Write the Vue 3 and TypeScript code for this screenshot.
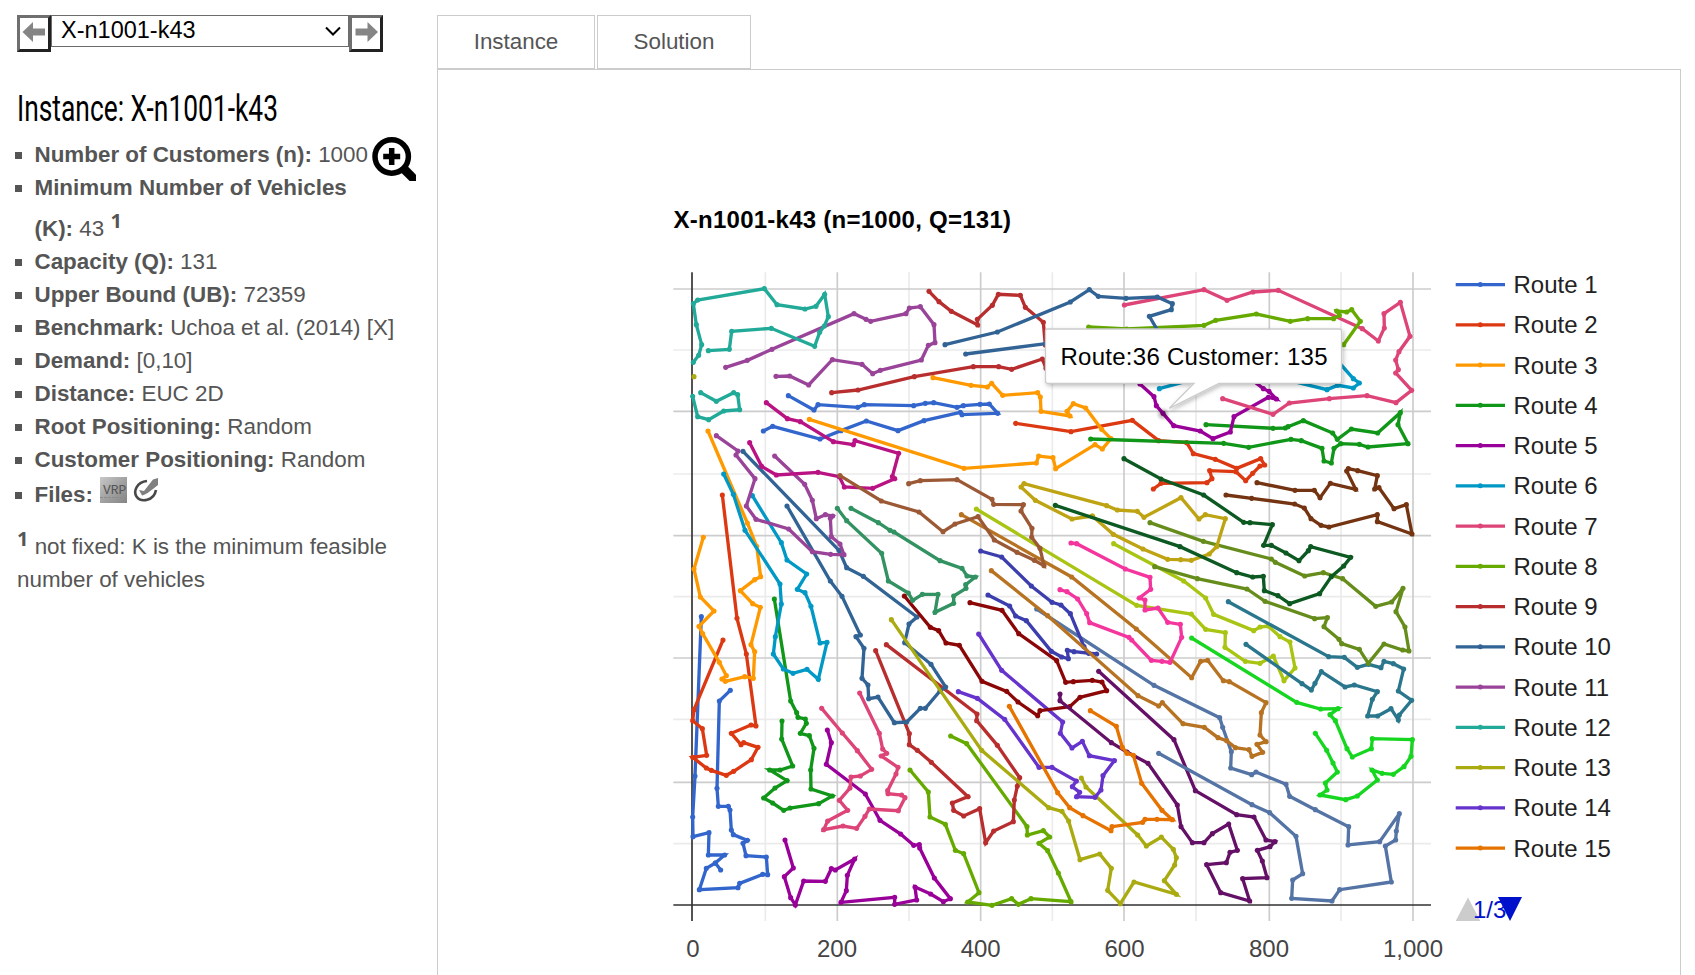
<script setup lang="ts">
interface Route {
  color: string
  paths: string[]
}

interface Fact {
  label: string
  value: string
}

const facts: Fact[] = [
  { label: 'Capacity (Q):', value: '131' },
  { label: 'Upper Bound (UB):', value: '72359' },
  { label: 'Benchmark:', value: 'Uchoa et al. (2014) [X]' },
  { label: 'Demand:', value: '[0,10]' },
  { label: 'Distance:', value: 'EUC 2D' },
  { label: 'Root Positioning:', value: 'Random' },
  { label: 'Customer Positioning:', value: 'Random' },
]

// Route coordinates in plot units (three units per pixel).
const routes: Route[] = [
  { color: '#3366cc', paths: [
    '355,407 432,450 444,434 563,442 583,434 731,437 766,430 791,428 861,442 880,437 930,433 958,432 983,460 876,464 871,457 762,482 684,512 589,483 513,512 450,537 308,499 280,513',
    '94,1070 75,1548 68,1671 69,1730 117,1718 115,1785 164,1785 136,1809 152,1830 136,1809 109,1825 88,1889 204,1883 209,1870 278,1843 293,1844 289,1791 228,1787 219,1750 232,1741 190,1724 184,1710 180,1650 175,1639 145,1639 141,1585 148,1323 181,1291' ] },
  { color: '#dc3912', paths: [
    '157,705 201,1075 229,1182 258,1398 243,1395 184,1420 213,1454 221,1448 264,1462 244,1499 191,1534 169,1546 124,1531 109,1524 68,1492 110,1486 97,1406 68,1382 72,1349 159,1140',
    '1037,490 1203,515 1387,481 1466,542 1550,548 1570,581 1636,598 1700,625 1772,596 1784,615 1770,618 1748,640 1727,662 1698,635 1619,632 1626,656 1611,668 1473,670 1450,687' ] },
  { color: '#ff9900', paths: [
    '789,353 903,376 952,381 965,370 998,406 1103,398 1111,411 1113,454 1200,468 1191,454 1210,431 1247,444 1295,508 1323,536 1297,567 1275,554 1157,626 1149,593 1106,588 1099,609 882,625 418,478',
    '114,513 232,789 260,859 272,950 254,959 211,992 248,1031 271,1042 243,1154 254,1175 250,1255 224,1250 166,1264 156,1257 169,1247 148,1207 98,1121 87,1099 132,1053 91,1011 72,927 100,832' ] },
  { color: '#109618', paths: [
    '1262,537 1661,550 1736,562 1863,538 1894,542 1956,565 1962,603 1984,609 1992,565 2012,551 2068,553 2094,561 2214,551 2184,494 2191,458 2123,519 2044,507 2002,538 1988,519 1900,482 1854,500 1846,504 1809,505 1608,494',
    '313,1017 362,1323 380,1358 384,1372 406,1377 409,1390 391,1420 418,1427 432,1465 422,1530 423,1587 487,1608 446,1631 360,1644 341,1651 308,1629 281,1614 315,1584 351,1562 299,1530 330,1530 368,1518 335,1437 336,1383' ] },
  { color: '#990099', paths: [
    '472,1410 484,1448 469,1513 586,1602 630,1681 692,1722 731,1756 748,1754 749,1764 793,1854 841,1916 820,1925 782,1902 735,1881 740,1920 674,1933 674,1912 513,1927 529,1892 532,1846 554,1797 496,1830 484,1826 466,1864 401,1863 376,1935 362,1913 343,1850 370,1824 345,1740',
    '1375,345 1410,372 1452,410 1459,437 1479,460 1511,497 1591,513 1629,536 1681,516 1692,470 1795,412 1819,417 1797,394 1780,386 1740,355' ] },
  { color: '#0099c6', paths: [
    '161,642 190,703 225,811 330,972 334,1032 316,1130 310,1182 340,1227 369,1240 411,1228 445,1258 471,1147 450,1149 423,1039 405,998 382,988 410,942 351,900 334,848 247,707',
    '1468,386 1570,358',
    '1860,362 1971,389 2003,376 2050,384 2068,369 2050,356 2005,305' ] },
  { color: '#dd4477', paths: [
    '1363,135 1602,89 1671,121 1749,96 1825,91 2077,206 2125,243 2143,204 2142,161 2191,127 2220,229 2187,275 2177,300 2185,329 2177,339 2225,391 2178,428 2091,407 1978,416 1858,429 1809,463 1658,416',
    '455,1345 517,1419 562,1472 605,1528 571,1548 543,1551 540,1584 508,1621 533,1651 473,1683 461,1709 519,1698 560,1705 585,1669 598,1647 685,1652 705,1613 695,1605 654,1601 653,1592 678,1542 684,1522 634,1488 650,1480 638,1467 628,1420 569,1299' ] },
  { color: '#66aa00', paths: [
    '1256,201 1370,207 1602,196 1637,181 1759,162 1861,184 1913,176 1991,176 2008,166 2000,153 2030,156 2045,149 2071,184 2021,254',
    '720,1530 775,1596 780,1671 826,1693 856,1771 881,1781 927,1898 893,1926 966,1936 1025,1916 1045,1933 1083,1916 1203,1925 1165,1839 1133,1772 1107,1750 1139,1731 1120,1712 1072,1725 1071,1700 890,1451 842,1428' ] },
  { color: '#b82e2e', paths: [
    '485,398 564,390 733,350 910,320 986,320 1025,328 1117,297 1128,325',
    '1126,255 1120,187 1066,142 1051,106 985,103 967,136 922,178 923,195 844,154 807,125 777,94',
    '649,1154 921,1362 920,1382 982,1456 1049,1553 1042,1578 1033,1620 1030,1685 971,1713 947,1748 929,1646 881,1668 851,1651 847,1629 894,1610 784,1507 742,1471 718,1454 718,1421 617,1172' ] },
  { color: '#316395', paths: [
    '825,254 982,216 1201,126 1258,89 1285,109 1368,115 1462,111 1507,131 1504,149 1438,169 1465,215',
    '887,282 1128,251',
    '219,574 507,871 530,923 580,949 741,1071 717,1092 704,1148 783,1213 827,1281 810,1293 766,1345 751,1345 710,1386 673,1388 624,1311 596,1316 594,1275 576,1255 582,1165 558,1130 571,1125 516,1009 481,963 351,738' ] },
  { color: '#994499', paths: [
    '167,322 232,301 306,268 552,161 588,178 602,184 708,161 718,144 751,140 792,194 795,248 775,256 754,300 631,331 608,341 576,313 487,299 416,375 359,348 318,349',
    '139,527 204,573 198,585 255,656 229,738 258,778 356,807 427,875 482,883 522,884 510,852 484,830 481,775 488,768 466,764 439,776 427,721 404,673 314,588' ] },
  { color: '#22aa99', paths: [
    '70,307 86,286 95,254 79,194 70,131 83,120 283,86 321,134 405,147 438,139 464,103 475,170 463,198 449,217 434,259 304,205 185,214 178,268 115,272',
    '92,398 139,424 191,398 203,404 209,449 161,453 116,479 83,470 68,409' ] },
  { color: '#aaaa11', paths: [
    '72,350',
    '664,1079 935,1471 1136,1643 1176,1654 1196,1683 1230,1799 1289,1782 1324,1825 1313,1891 1351,1931 1392,1866 1519,1903 1483,1862 1514,1815 1519,1793 1510,1768 1474,1731 1429,1758 1403,1725 1248,1581 1234,1554' ] },
  { color: '#6633cc', paths: [
    '926,1122 995,1231 1178,1386 1171,1420 1206,1464 1237,1444 1258,1487 1333,1502 1299,1547 1293,1590 1275,1612 1220,1610 1229,1597 1207,1580 1219,1563 1146,1522 1107,1522 1004,1378 922,1315 865,1295' ] },
  { color: '#8b0707', paths: [
    '703,1008 781,1102 806,1112 828,1149 868,1156 936,1264 1010,1294 1044,1326 1103,1367 1110,1352 1199,1340 1230,1312 1310,1292 1296,1266 1267,1261 1210,1265 1187,1267 1160,1202 1046,1121 996,1051 900,1028' ] },
  { color: '#651067', paths: [
    '1170,1302 1170,1322 1324,1448 1371,1476 1434,1510 1522,1635 1533,1700 1567,1748 1602,1748 1627,1721 1676,1692 1702,1771 1680,1777 1669,1808 1610,1814 1652,1898 1739,1923 1718,1856 1791,1853 1777,1803 1762,1771 1800,1760 1815,1745 1788,1740 1752,1671 1700,1664 1576,1592 1512,1439 1286,1234' ] },
  { color: '#e67300', paths: [
    '1018,1339 1163,1598 1199,1643 1239,1667 1323,1712 1326,1700 1418,1687 1425,1678 1461,1678 1507,1679 1476,1651 1415,1570 1390,1486 1371,1480 1357,1462 1339,1399 1261,1352' ] },
  { color: '#329262', paths: [
    '502,745 530,782 635,880 655,963 715,999 728,1021 757,1003 804,1003 795,1057 851,1030 851,1008 888,985 887,974 916,951 891,948 876,925 810,902 672,816 660,811 625,788 543,745' ] },
  { color: '#5574a6', paths: [
    '1100,1047 1452,1276 1649,1373 1658,1402 1684,1475 1682,1524 1745,1544 1758,1536 1848,1573 1859,1609 1936,1649 2036,1700 2034,1755 2129,1745 2188,1661 2179,1713 2177,1740 2146,1758 2164,1866 2009,1889 1986,1923 1865,1915 1868,1860 1898,1841 1878,1729 1799,1658 1746,1634 1466,1480' ] },
  { color: '#3b3eac', paths: [
    '932,873 995,891 1084,978 1146,1027 1173,1035 1201,1061 1242,1160 1256,1180 1280,1182 1212,1175 1192,1171 1195,1196 1175,1191 1144,1174 1069,1082 1037,1068 1019,1038 954,1005' ] },
  { color: '#b77322', paths: [
    '874,764 1205,951 1399,1107 1565,1253 1592,1204 1613,1201 1660,1262 1678,1265 1788,1328 1774,1358 1770,1425 1788,1445 1761,1453 1778,1477 1746,1489 1737,1469 1696,1463 1670,1442 1644,1433 1603,1402 1539,1391 1477,1328 1466,1338 1404,1307 1133,1067 964,932' ] },
  { color: '#16d620', paths: [
    '1565,1134 1880,1327 1952,1347 2004,1346 1980,1364 1996,1382 2031,1466 2047,1491 2104,1466 2107,1436 2227,1439 2223,1489 2202,1520 2170,1543 2136,1540 2106,1530 2122,1560 2062,1608 2027,1619 1950,1605 1971,1590 1966,1569 2002,1536 1989,1509 1970,1471 1936,1420' ] },
  { color: '#b91383', paths: [
    '239,548 275,619 319,645 444,637 508,650 523,681 608,685 674,656 667,650 686,580 555,542 550,554 490,545 391,485 352,476 289,428' ] },
  { color: '#a9c413', paths: [
    '919,747 1400,1036 1564,1062 1607,1108 1666,1118 1665,1162 1726,1204 1770,1210 1810,1188 1842,1262 1875,1224 1860,1146 1830,1130 1794,1098 1770,1101 1751,1112 1631,1063 1607,1014 1541,963 1331,851' ] },
  { color: '#f4359e', paths: [
    '1203,849 1220,851 1366,927 1440,952 1442,988 1408,1014 1425,1020 1425,1050 1464,1044 1493,1087 1531,1093 1535,1132 1500,1207 1476,1204 1444,1201 1385,1140 1377,1132 1259,1088 1250,1061 1223,1017 1191,995 1170,989' ] },
  { color: '#9c5935', paths: [
    '510,647 634,723 747,756 819,815 855,792 924,770 973,840 1041,877 1093,901 1122,917 1110,865 1085,832 1086,805 1053,753 1060,734 971,733 966,718 861,659 751,662 716,671' ] },
  { color: '#2a778d', paths: [
    '1675,1025 1976,1190 2023,1192 2062,1222 2095,1213 2133,1223 2142,1204 2170,1211 2201,1227 2185,1293 2225,1321 2188,1365 2185,1380 2163,1346 2123,1368 2093,1368 2107,1318 2122,1295 2053,1275 2025,1281 1954,1235 1935,1270 1924,1290 1896,1271 1728,1153' ] },
  { color: '#668d1c', paths: [
    '1440,788 1600,844 1804,897 1816,907 1904,948 1960,938 2018,956 2117,1039 2165,1026 2199,985 2178,1055 2205,1101 2217,1173 2198,1170 2142,1152 2095,1210 2068,1168 2015,1151 2007,1138 1962,1100 1972,1073 1934,1076 1785,1024 1731,987 1582,956 1454,920' ] },
  { color: '#bea413', paths: [
    '1267,768 1206,777 1096,721 1053,681 1062,671 1310,737 1342,750 1402,754 1422,772 1533,713 1587,777 1606,764 1666,776 1640,860 1618,882 1564,901 1532,899 1493,898 1419,867 1330,823 1267,768' ] },
  { color: '#0c5922', paths: [
    '1362,596 1473,657 1601,705 1721,787 1740,788 1807,794 1781,856 1804,856 1848,879 1887,902 1915,872 1922,860 2042,892 2021,918 1984,950 1949,1001 1859,1031 1824,1007 1783,992 1780,949 1748,951 1700,938 1530,860 1156,736' ] },
  { color: '#743411', paths: [
    '1668,705 1745,715 1874,732 1903,744 1923,776 1953,796 1977,801 2122,764 2122,785 2226,822 2209,734 2172,746 2127,683 2114,687 2122,647 2063,632 2035,626 2030,633 2057,688 1981,670 1950,713 1933,691 1875,691 1761,668' ] },
]

const lines = routes.flatMap((r) =>
  r.paths.map((p) => ({
    color: r.color,
    points: p,
    stops: p.split(' ').map((s) => s.split(',').map(Number)),
  })),
)

const majorX = [502, 932, 1362, 1798, 2229]
const minorX = [286, 717, 1147, 1578, 2013]
const majorY = [87, 454, 827, 1194, 1567]
const minorY = [270, 642, 1010, 1378, 1751]

const ticks = [
  { x: 693, label: '0' },
  { x: 837, label: '200' },
  { x: 980.7, label: '400' },
  { x: 1124.5, label: '600' },
  { x: 1269, label: '800' },
  { x: 1413, label: '1,000' },
]

const legendColors = [
  '#3366cc', '#dc3912', '#ff9900', '#109618', '#990099',
  '#0099c6', '#dd4477', '#66aa00', '#b82e2e', '#316395',
  '#994499', '#22aa99', '#aaaa11', '#6633cc', '#e67300',
]
const legend = legendColors.map((color, i) => ({
  color,
  label: `Route ${i + 1}`,
  y: 284.6 + i * 40.25,
}))
</script>

<template>
  <div class="page">
    <aside class="sidebar">
      <div class="picker">
        <button class="step" aria-label="Previous">
          <svg width="26" height="26" viewBox="0 0 26 26">
            <path d="M1.500 13 12 3V9.500h12v7H12v6.500Z" fill="#858585" />
          </svg>
        </button>
        <div class="select">
          <span>X-n1001-k43</span>
          <svg width="16" height="10" viewBox="0 0 16 10">
            <path d="M1 1.500 8 8.500 15 1.500" fill="none" stroke="#000" stroke-width="2" />
          </svg>
        </div>
        <button class="step" aria-label="Next">
          <svg width="26" height="26" viewBox="0 0 26 26">
            <path d="M25 13 14.500 3V9.500H2.500v7h12v6.500Z" fill="#858585" />
          </svg>
        </button>
      </div>

      <svg class="heading" width="300" height="56" viewBox="0 0 300 56">
        <text x="0" y="40" textLength="261" lengthAdjust="spacingAndGlyphs">Instance: X-n1001-k43</text>
      </svg>

      <ul class="facts">
        <li>
          <b>Number of Customers (n):</b>&nbsp;1000
          <svg class="magnifier" width="44" height="44" viewBox="0 0 44 44">
            <circle cx="19.700" cy="19.500" r="16.700" fill="none" stroke="#000" stroke-width="5.500" />
            <path d="M32 32 46 46" stroke="#000" stroke-width="9" />
            <path d="M19.700 11v17M11.200 19.500h17" stroke="#000" stroke-width="5.500" />
          </svg>
        </li>
        <li class="two"><b>Minimum Number of Vehicles</b><span class="second"><b>(K):</b> 43 <sup>1</sup></span></li>
        <li v-for="f in facts" :key="f.label"><b>{{ f.label }}</b> {{ f.value }}</li>
        <li class="files">
          <b>Files:</b>
          <svg class="file" width="27" height="26" viewBox="0 0 27 26">
            <defs>
              <linearGradient id="vrp" x1="0" y1="0" x2="1" y2="1">
                <stop offset="0" stop-color="#c8c8c8" />
                <stop offset="0.500" stop-color="#a2a2a2" />
                <stop offset="1" stop-color="#858585" />
              </linearGradient>
            </defs>
            <rect width="27" height="26" fill="url(#vrp)" />
            <path d="M0 20.500h27" stroke="#8c8c8c" stroke-width="1" stroke-dasharray="3 1" />
            <text class="vrp" x="3" y="17">VRP</text>
          </svg>
          <svg class="file check" width="26" height="26" viewBox="0 0 26 26">
            <path d="M14 4C4 5 0 14 3.500 19.500 8 26 21 24 23 13" fill="none" stroke="#484848" stroke-width="2.600" />
            <path d="M6 13 9 18.500C14 17.500 19 12.500 25 8V1L20 2.500 11 14Z" fill="#808080" />
          </svg>
        </li>
      </ul>

      <p class="note"><sup>1</sup> not fixed: K is the minimum feasible<br />number of vehicles</p>
    </aside>

    <main class="content">
      <nav class="tabs">
        <div class="tab">Instance</div>
        <div class="tab second-tab">Solution</div>
      </nav>
      <section class="panel">
        <svg class="chart" width="1020" height="780" viewBox="660 195 1020 780">
          <defs>
            <filter id="shade" x="-10%" y="-20%" width="120%" height="160%">
              <feDropShadow dx="1.500" dy="2" stdDeviation="2" flood-color="#000" flood-opacity="0.25" />
            </filter>
            <filter id="halo" x="-50%" y="-50%" width="200%" height="200%">
              <feGaussianBlur stdDeviation="5" />
            </filter>
          </defs>

          <text class="title" x="673.500" y="227.500" textLength="337.500">X-n1001-k43 (n=1000, Q=131)</text>

          <g transform="translate(670 260) scale(0.333333)">
            <g stroke="#ebebeb" stroke-width="5">
              <path v-for="x in minorX" :key="x" :d="`M${x} 37V1983`" />
              <path v-for="y in minorY" :key="y" :d="`M10 ${y}H2283`" />
            </g>
            <g stroke="#cccccc" stroke-width="5">
              <path v-for="x in majorX" :key="x" :d="`M${x} 37V1983`" />
              <path v-for="y in majorY" :key="y" :d="`M10 ${y}H2283`" />
            </g>
            <path d="M66 37V1983M10 1935H2283" stroke="#333333" stroke-width="5" />

            <g v-for="(l, i) in lines" :key="i" :stroke="l.color" :fill="l.color">
              <polyline :points="l.points" fill="none" stroke-width="10" />
              <circle v-for="(s, j) in l.stops" :key="j" :cx="s[0]" :cy="s[1]" r="7.700" stroke="none" />
            </g>
            <circle cx="1479" cy="462" r="15" fill="#000" opacity="0.250" filter="url(#halo)" />
          </g>

          <path
            class="bubble"
            filter="url(#shade)"
            d="M1047.500 329H1339.500A2 2 0 0 1 1341.500 331V381.300A2 2 0 0 1 1339.500 383.300H1219L1169.300 408.300 1194 383.300H1047.500A2 2 0 0 1 1045.500 381.300V331A2 2 0 0 1 1047.500 329Z"
          />
          <text class="tip" x="1060.500" y="364.500" textLength="267">Route:36 Customer: 135</text>

          <text v-for="t in ticks" :key="t.label" class="tick" :x="t.x" y="957.300" text-anchor="middle">{{ t.label }}</text>

          <g v-for="item in legend" :key="item.label">
            <path :d="`M1455.700 ${item.y}H1505`" :stroke="item.color" stroke-width="3.200" />
            <circle cx="1480.300" :cy="item.y" r="2.500" :fill="item.color" />
            <text class="label" x="1513.500" :y="item.y + 8.400">{{ item.label }}</text>
          </g>

          <path d="M1455.700 921H1480.300L1468 897.500Z" fill="#cccccc" />
          <text class="pager" x="1473" y="918">1/3</text>
          <path d="M1498 897H1522L1510 921Z" fill="#0011cc" />
        </svg>
      </section>
    </main>
  </div>
</template>

<style>
body {
  margin: 0;
  background: #fff;
}
</style>

<style scoped>
.page {
  display: flex;
  width: 1695px;
  height: 975px;
  overflow: hidden;
  background: #fff;
  color: #555;
  font-family: "Liberation Sans", Arial, sans-serif;
  font-size: 22.4px;
}

.sidebar {
  flex: none;
  width: 420px;
  padding: 15px 0 0 17px;
  box-sizing: border-box;
}

.picker {
  display: flex;
  align-items: flex-start;
}

.step {
  display: flex;
  align-items: center;
  justify-content: center;
  width: 34px;
  height: 37px;
  padding: 0 0 3px;
  box-sizing: border-box;
  border: 3px solid;
  border-color: #6f6f6f #222 #222 #6f6f6f;
  background: #fff;
}

.select {
  display: flex;
  align-items: center;
  justify-content: space-between;
  width: 298px;
  height: 32px;
  padding: 0 7px 1px 9px;
  box-sizing: border-box;
  border: 1px solid #6b6b6b;
  color: #000;
  font-size: 23.5px;
}

.heading {
  display: block;
  margin-top: 29px;
  font-family: Roboto, sans-serif;
  font-size: 36px;
  fill: #000;
}

.facts {
  margin: 1px 0 0;
  padding: 0 0 0 17.500px;
  list-style: none;
}

.facts li {
  position: relative;
  height: 33px;
  line-height: 33px;
  white-space: nowrap;
}

.facts li::before {
  content: "";
  position: absolute;
  left: -19.500px;
  top: 14px;
  width: 7px;
  height: 7px;
  background: #555;
}

.facts .two {
  height: 74px;
}

.second {
  display: block;
  height: 41px;
  line-height: 49px;
}

.facts .files {
  display: flex;
  align-items: flex-start;
  height: 35px;
  line-height: 37px;
}

.facts .files::before {
  top: 16px;
}

.file {
  margin: 1px 0 0 7px;
}

.check {
  margin-left: 6px;
}

.magnifier {
  position: absolute;
  left: 337.500px;
  top: -1.500px;
}

.vrp {
  fill: #555;
  font-family: "Liberation Mono", monospace;
  font-size: 13px;
}

sup {
  position: relative;
  top: -8px;
  line-height: 0;
  vertical-align: baseline;
  font-family: "Open Sans", sans-serif;
  font-weight: 700;
  font-size: 20px;
}

.note {
  margin: 19px 0 0;
  line-height: 33px;
}

.content {
  flex: none;
  width: 1244px;
  margin-left: 17px;
  padding-top: 15px;
}

.tabs {
  display: flex;
  gap: 2px;
}

.tab {
  width: 158px;
  height: 54px;
  box-sizing: border-box;
  border: 1px solid #ccc;
  line-height: 51px;
  text-align: center;
}

.second-tab {
  width: 154px;
}

.panel {
  display: flex;
  justify-content: flex-end;
  height: 1000px;
  box-sizing: border-box;
  border: 1px solid #ccc;
}

.chart {
  flex: none;
  margin: 125px 0 0;
}

.title {
  fill: #000;
  font-size: 24px;
  font-weight: 700;
}

.bubble {
  fill: #fff;
  stroke: #ccc;
  stroke-width: 1.300;
}

.tip {
  fill: #000;
  font-size: 24px;
}

.tick {
  fill: #444;
  font-size: 24px;
}

.label {
  fill: #222;
  font-size: 24px;
}

.pager {
  fill: #0011cc;
  font-size: 24px;
}
</style>
